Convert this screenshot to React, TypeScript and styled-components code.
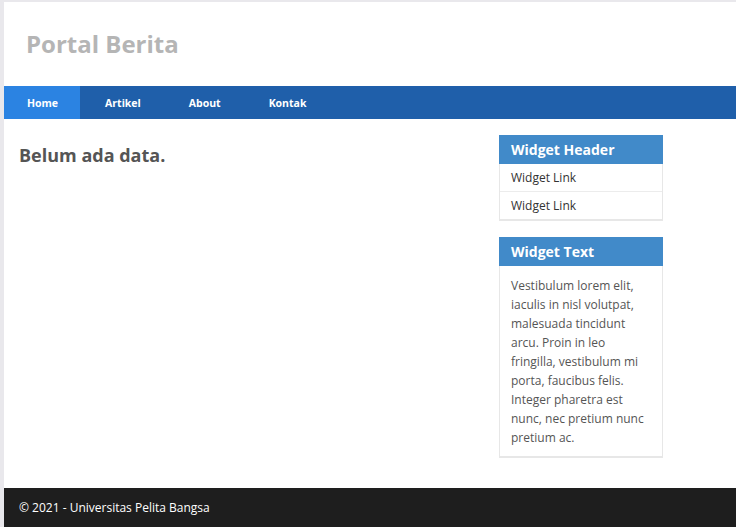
import React from "react";
import styled, { createGlobalStyle } from "styled-components";

const GlobalStyle = createGlobalStyle`
  html, body {
    margin: 0;
    padding: 0;
    background: #e9e8ec;
    font-family: "Open Sans", "Liberation Sans", sans-serif;
    overflow: hidden;
  }
`;

const Container = styled.div`
  margin: 2px 0 0 4px;
  width: 980px;
  background: #fff;
`;

const Header = styled.header`
  height: 84px;
  display: flex;
  align-items: center;
  padding: 0 22px;
`;

const Title = styled.h1`
  margin: -2px 0 0;
  font-size: 24px;
  font-weight: 700;
  color: #b5b5b5;
`;

const Nav = styled.nav`
  background: #1f5faa;
  height: 33px;
  display: flex;
`;

const NavItem = styled.a<{ active?: boolean }>`
  display: flex;
  align-items: center;
  padding: 0 ${(p) => (p.active ? "22px 0 23px" : "23px 0 25px")};
  font-size: 10.5px;
  font-weight: 700;
  color: #fff;
  text-decoration: none;
  background: ${(p) => (p.active ? "#2b83e2" : "transparent")};
`;

const Body = styled.div`
  display: grid;
  grid-template-columns: 495px 164px;
  padding: 16px 0 30px;
`;

const Main = styled.main`
  padding: 0 15px;
`;

const Message = styled.h2`
  margin: 8px 0 0;
  font-size: 18px;
  font-weight: 700;
  color: #555;
`;

const Sidebar = styled.aside`
  display: flex;
  flex-direction: column;
  gap: 16px;
`;

const Widget = styled.div`
  border: 1px solid #e7e7e7;
  border-bottom-width: 2px;
`;

const WidgetHead = styled.div`
  background: #418ac9;
  color: #fff;
  font-size: 14px;
  font-weight: 700;
  height: 29px;
  display: flex;
  align-items: center;
  padding: 0 12px;
  margin: -1px -1px 0;
`;

const WidgetLink = styled.a`
  display: block;
  padding: 0 11px;
  height: 27px;
  line-height: 27px;
  font-size: 12px;
  color: #333;
  text-decoration: none;
  & + & {
    border-top: 1px solid #ececec;
  }
`;

const WidgetText = styled.p`
  margin: 0;
  padding: 10px 11px 9px;
  font-size: 12px;
  line-height: 19px;
  color: #555;
`;

const Footer = styled.footer`
  background: #1e1e1e;
  color: #fff;
  height: 39px;
  display: flex;
  align-items: center;
  padding: 0 15px;
  font-size: 12px;
`;

const navLinks = ["Home", "Artikel", "About", "Kontak"];

export default function App() {
  return (
    <>
      <GlobalStyle />
      <Container>
        <Header>
          <Title>Portal Berita</Title>
        </Header>
        <Nav>
          {navLinks.map((n, i) => (
            <NavItem key={n} href="#" active={i === 0}>
              {n}
            </NavItem>
          ))}
        </Nav>
        <Body>
          <Main>
            <Message>Belum ada data.</Message>
          </Main>
          <Sidebar>
            <Widget>
              <WidgetHead>Widget Header</WidgetHead>
              <WidgetLink href="#">Widget Link</WidgetLink>
              <WidgetLink href="#">Widget Link</WidgetLink>
            </Widget>
            <Widget>
              <WidgetHead>Widget Text</WidgetHead>
              <WidgetText>
                Vestibulum lorem elit, iaculis in nisl volutpat, malesuada tincidunt
                arcu. Proin in leo fringilla, vestibulum mi porta, faucibus felis.
                Integer pharetra est nunc, nec pretium nunc pretium ac.
              </WidgetText>
            </Widget>
          </Sidebar>
        </Body>
        <Footer>© 2021 - Universitas Pelita Bangsa</Footer>
      </Container>
    </>
  );
}
